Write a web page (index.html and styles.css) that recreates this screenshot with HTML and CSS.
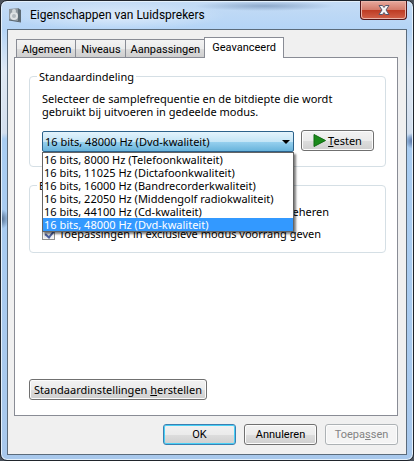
FILE: index.html
```html
<!DOCTYPE html>
<html lang="nl">
<head>
  <meta charset="UTF-8">
  <meta name="viewport" content="width=device-width, initial-scale=1.0">
  <title>Eigenschappen van Luidsprekers</title>
  <link rel="stylesheet" href="styles.css">
</head>
<body>

<div class="window">
  <header class="titlebar">
    <svg class="title-icon" width="14" height="16" viewBox="0 0 14 16">
      <path d="M1 2 L10 1 V14 L1 13 Z" fill="#8f989f"/>
      <path d="M10 1 L13 3 V15 L10 14 Z" fill="#5d6a74"/>
      <ellipse cx="6" cy="9" rx="4" ry="4" fill="#dfe2e4"/>
      <ellipse cx="6" cy="9" rx="2" ry="2" fill="#b2b9be"/>
      <circle cx="6" cy="4" r="2" fill="#d3d8db"/>
      <path d="M1 13 L13 15" stroke="#59646c"/>
    </svg>
    <h1>Eigenschappen van Luidsprekers</h1>
    <button class="close" aria-label="Sluiten">
      <svg width="12" height="10" viewBox="0 0 12 10">
        <path d="M1 0.5 H4.5 L6 2.5 L7.5 0.5 H11 L8 5 L11 9.5 H7.5 L6 7.5 L4.5 9.5 H1 L4 5 Z" fill="#f7f7f7" stroke="#55586c"/>
      </svg>
    </button>
  </header>

  <main class="client">
    <nav class="tabs">
      <a href="#algemeen">Algemeen</a>
      <a href="#niveaus">Niveaus</a>
      <a href="#aanpassingen">Aanpassingen</a>
      <a href="#geavanceerd" class="active">Geavanceerd</a>
    </nav>

    <section class="page" id="geavanceerd">
      <fieldset class="format">
        <legend>Standaardindeling</legend>
        <label class="intro" for="format">Selecteer de samplefrequentie en de bitdiepte die wordt<br>gebruikt bij uitvoeren in gedeelde modus.</label>
        <div class="row">
          <div class="combo">
            <select id="format">
              <option>16 bits, 48000 Hz (Dvd-kwaliteit)</option>
            </select>
            <svg class="arrow" width="8" height="4" viewBox="0 0 8 4">
              <path d="M0 0 H8 L4 4 Z" fill="#000"/>
            </svg>
            <ul class="list">
              <li>16 bits, 8000 Hz (Telefoonkwaliteit)</li>
              <li>16 bits, 11025 Hz (Dictafoonkwaliteit)</li>
              <li>16 bits, 16000 Hz (Bandrecorderkwaliteit)</li>
              <li>16 bits, 22050 Hz (Middengolf radiokwaliteit)</li>
              <li>16 bits, 44100 Hz (Cd-kwaliteit)</li>
              <li class="selected">16 bits, 48000 Hz (Dvd-kwaliteit)</li>
            </ul>
          </div>
          <button class="btn test">
            <svg width="13" height="13" viewBox="0 0 13 13">
              <path d="M1 0.5 L12.5 6.5 L1 12.5 Z" fill="#1b8a1b" stroke="#0f6b12"/>
            </svg>
            <span><u>T</u>esten</span>
          </button>
        </div>
      </fieldset>

      <fieldset class="exclusive">
        <legend>Exclusieve modus</legend>
        <label class="check"><input type="checkbox" checked>Toepassingen mogen dit apparaat exclusief beheren</label>
        <label class="check"><input type="checkbox" checked>Toepassingen in exclusieve modus voorrang geven</label>
      </fieldset>

      <button class="btn restore">Standaardinstellingen <u>h</u>erstellen</button>
    </section>

    <footer class="actions">
      <button class="btn default">OK</button>
      <button class="btn">Annuleren</button>
      <button class="btn" disabled>Toepa<u>s</u>sen</button>
    </footer>
  </main>
</div>

</body>
</html>
```
FILE: styles.css
```css
* {
  box-sizing: border-box;
}
body {
  margin: 0;
  background-color: #4b525c;
  color: #000;
  font-family: "Noto Sans", "Open Sans", sans-serif;
  font-size: 11px;
  line-height: 13px;
}
button, select, input {
  font: inherit;
  color: inherit;
  margin: 0;
}
.window {
  display: flex;
  flex-direction: column;
  min-height: 100vh;
  padding: 0 6px 5px;
  border: 1px solid #20252c;
  border-radius: 7px;
  background:
    radial-gradient(ellipse 70px 5px at 64% 5px, rgba(90, 120, 160, 0.5), transparent),
    radial-gradient(ellipse 110px 14px at 28% 15px, rgba(255, 255, 255, 0.5), transparent),
    radial-gradient(ellipse 8px 10px at 0 218px, #4f6a8b, transparent),
    radial-gradient(ellipse 8px 8px at 100% 140px, #4f6a9b, transparent),
    linear-gradient(#c5dcf5, #b4d4f6 28px, #dfe8f3 70px, #d3dfee 132px, #a9cdf2 138px, #a8c8ec);
  box-shadow: inset 0 0 0 1px #e4f0fb;
}
.titlebar {
  display: flex;
  align-items: flex-start;
  height: 28px;
}
.title-icon {
  margin: 6px 8px 0 1px;
}
.titlebar h1 {
  flex: 1;
  margin: 5px 0 0;
  font-family: Roboto, sans-serif;
  font-size: 12px;
  font-weight: normal;
  line-height: 18px;
}
.close {
  display: flex;
  align-items: center;
  justify-content: center;
  width: 47px;
  height: 19px;
  padding: 0;
  border: 1px solid #52171a;
  border-top: 0;
  border-radius: 0 0 4px 4px;
  background: linear-gradient(#e7a99d, #d47c6b 48%, #bd3a22 50%, #d2624a);
  box-shadow: inset 0 0 0 1px #eab5aa;
}
.client {
  flex: 1;
  display: flex;
  flex-direction: column;
  padding: 7px 8px 9px 6px;
  border: 1px solid #5b6b7b;
  background-color: #f0f0f0;
}
.tabs {
  display: flex;
  align-items: flex-end;
  padding-left: 2px;
  font-family: Roboto, sans-serif;
}
.tabs a {
  height: 18px;
  padding: 3px 4px 0 5px;
  border: 1px solid #898c95;
  border-bottom: 0;
  border-right: 0;
  background: linear-gradient(#f3f3f3, #ebebeb 50%, #dddddd 51%, #cfcfcf);
  color: #000;
  text-decoration: none;
}
.tabs .active {
  height: 21px;
  margin-bottom: -1px;
  padding: 3px 7px 0;
  border-right: 1px solid #898c95;
  background: #fff;
  z-index: 1;
}
.page {
  flex: 1;
  display: flex;
  flex-direction: column;
  align-items: flex-start;
  padding: 12px 11px 15px 14px;
  border: 1px solid #898c95;
  background-color: #fff;
}
fieldset {
  width: 100%;
  margin: 0;
  padding: 0 11px 0 12px;
  border: 1px solid #d5dfe5;
  border-radius: 4px;
}
legend {
  margin-left: -5px;
  padding: 0 2px;
}
.format {
  height: 97px;
}
.intro {
  display: block;
  margin-top: 9px;
}
.row {
  display: flex;
  gap: 7px;
  margin-top: 12px;
}
.combo {
  flex: 1;
  position: relative;
  height: 21px;
  margin-top: 1px;
}
.combo select {
  display: block;
  width: 100%;
  height: 21px;
  padding: 0 2px;
  appearance: none;
  border: 1px solid #2c628b;
  border-radius: 2px;
  background: linear-gradient(#e3f3fc, #c4e5f6 50%, #98d1ef 51%, #68b3db);
}
.arrow {
  position: absolute;
  right: 4px;
  top: 9px;
}
.list {
  position: absolute;
  top: 21px;
  left: 0;
  right: 0;
  margin: 0;
  padding: 0;
  border: 1px solid #646464;
  background-color: #fff;
  box-shadow: 2px 2px 2px rgba(0, 0, 0, 0.5);
  list-style: none;
  z-index: 2;
}
.list li {
  padding-left: 1px;
  white-space: nowrap;
}
.list .selected {
  background-color: #3399ff;
  color: #fff;
}
.btn {
  display: flex;
  align-items: center;
  justify-content: center;
  width: 73px;
  height: 21px;
  padding: 0;
  border: 1px solid #707070;
  border-radius: 3px;
  background: linear-gradient(#f2f2f2, #ebebeb 50%, #dddddd 51%, #cfcfcf);
  box-shadow: inset 0 0 0 1px #fcfcfc;
  white-space: pre;
}
.test {
  gap: 2px;
}
.exclusive {
  height: 74px;
  margin-top: 12px;
}
.check {
  display: flex;
  align-items: center;
  gap: 4px;
  margin-top: 13px;
  white-space: nowrap;
}
.check + .check {
  margin-top: 9px;
}
.check input {
  width: 13px;
  height: 13px;
  appearance: none;
  border: 1px solid #8e8f8f;
  background: linear-gradient(135deg, #d4d8dd, #f6f6f6);
  box-shadow: inset 0 0 0 1px #f4f4f4;
}
.check input:checked::after {
  content: "";
  display: block;
  width: 4px;
  height: 8px;
  margin: 0 0 0 4px;
  border: solid #4b5f9c;
  border-width: 0 2px 2px 0;
  transform: rotate(40deg);
}
.restore {
  width: 178px;
  margin-top: auto;
}
.actions {
  display: flex;
  justify-content: flex-end;
  gap: 8px;
  padding-top: 8px;
  font-family: Roboto, sans-serif;
}
.default {
  border-color: #3c7fb1;
  box-shadow: inset 0 0 0 1px #48d0f6;
}
.btn:disabled {
  border-color: #adb2b5;
  background: #f4f4f4;
  color: #838383;
}
```
